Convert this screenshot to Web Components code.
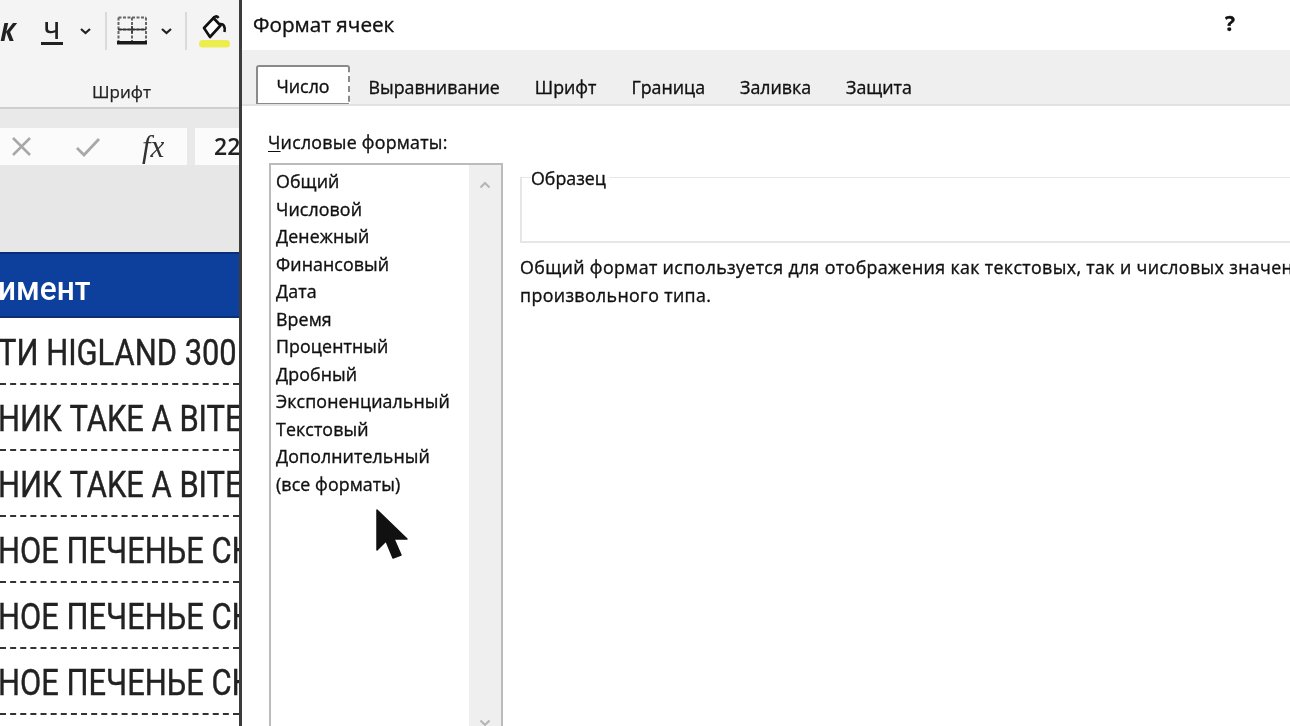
<!DOCTYPE html>
<html lang="ru"><head><meta charset="utf-8"><title>Формат ячеек</title>
<style>
html,body{margin:0;height:100%;overflow:hidden;background:#fff}
body{font-family:"Open Sans","Noto Sans",sans-serif;color:#111}
app-shell{filter:blur(.45px)}
</style></head><body>
<app-shell>
  <sheet-pane slot="left">
    <sheet-row>ТИ HIGLAND 300</sheet-row>
    <sheet-row>НИК TAKE A BITE</sheet-row>
    <sheet-row>НИК TAKE A BITE</sheet-row>
    <sheet-row>НОЕ ПЕЧЕНЬЕ СК</sheet-row>
    <sheet-row>НОЕ ПЕЧЕНЬЕ СК</sheet-row>
    <sheet-row>НОЕ ПЕЧЕНЬЕ СК</sheet-row>
  </sheet-pane>
  <format-dialog slot="right">
    <format-item>Общий</format-item><format-item>Числовой</format-item><format-item>Денежный</format-item>
    <format-item>Финансовый</format-item><format-item>Дата</format-item><format-item>Время</format-item>
    <format-item>Процентный</format-item><format-item>Дробный</format-item><format-item>Экспоненциальный</format-item>
    <format-item>Текстовый</format-item><format-item>Дополнительный</format-item><format-item>(все форматы)</format-item>
  </format-dialog>
  <mouse-cursor></mouse-cursor>
</app-shell>
<script>
function def(name, html){
  customElements.define(name, class extends HTMLElement{
    constructor(){super();this.attachShadow({mode:'open'}).innerHTML=html;}
  });
}
def('app-shell',`<style>
:host{display:grid;grid-template-columns:239px 3px 1fr;width:1290px;height:726px;overflow:hidden;position:relative}
.rule{background:#3c3c3c}
</style><slot name="left"></slot><div class="rule"></div><slot name="right"></slot><slot></slot>`);

def('sheet-pane',`<style>
:host{display:flex;flex-direction:column;overflow:hidden;background:#fff;min-width:0}
.ribbon{height:107px;background:#f4f4f4;border-bottom:2px solid #cfcfcf;display:flex;flex-direction:column;flex:none}
.tools{display:flex;align-items:center;height:48px;margin-top:7px}
.k{font:italic 700 25px "Open Sans",sans-serif;margin-left:0;width:24px;color:#222}
.u{width:34px;margin-left:11px;display:flex;justify-content:center}
.u span{font:600 23px/26px "Open Sans",sans-serif;border-bottom:3px solid #222;padding:0 3px;color:#222;height:25px;display:block}
.chev{flex:none}
.sep{width:2px;height:38px;background:#dadada;flex:none}
.group{font-size:17px;text-align:center;margin-top:25px;padding-left:4px;line-height:24px;color:#222;-webkit-text-stroke:.25px #222}
.fbar{background:#e9e9e9;padding-top:19px;display:flex;gap:8px;flex:none;height:37px}
.names{width:187px;background:#fbfbfb;display:flex;align-items:center}
.val{flex:1;background:#fbfbfb;font:600 23px/37px "Open Sans",sans-serif;padding-left:19px;overflow:hidden;white-space:nowrap;color:#222}
.fx{font:italic 400 31px "Liberation Serif",serif;color:#333;margin-left:41px;line-height:37px}
.gap{height:87px;background:#e7e7e7;flex:none}
.head{height:66px;background:#0d3f9c;border-top:2px solid #0a2e78;border-bottom:2px solid #0a2e78;color:#fff;flex:none;overflow:hidden;white-space:nowrap;box-sizing:border-box;margin-bottom:1px}
.head span{display:inline-block;font:500 34px/68px Roboto,sans-serif;transform:scaleX(.93);transform-origin:0 50%;margin-left:-2px}
</style>
<div class="ribbon">
  <div class="tools">
    <span class="k">К</span>
    <div class="u"><span>Ч</span></div>
    <svg class="chev" style="margin-left:10px" width="13" height="8" viewBox="0 0 13 8"><path d="M2 2l4.500 4L11 2" fill="none" stroke="#222" stroke-width="2.200"/></svg>
    <div class="sep" style="margin-left:13px"></div>
    <svg style="margin-left:9px;flex:none" width="32" height="32" viewBox="0 0 32 32"><path d="M2.500 2.500H30M2.500 14.500H30M2.500 2.500V27M30 2.500V27M16 2.500V27" fill="none" stroke="#666" stroke-width="2" stroke-dasharray="3 1.500"/><path d="M2 14.500H30M16 11V18" stroke="#333" stroke-width="1.500"/><rect x="1" y="26" width="30" height="3.500" fill="#1a1a1a"/></svg>
    <svg class="chev" style="margin-left:12px" width="13" height="8" viewBox="0 0 13 8"><path d="M2 2l4.500 4L11 2" fill="none" stroke="#222" stroke-width="2.200"/></svg>
    <div class="sep" style="margin-left:12px"></div>
    <svg style="margin-left:11px;flex:none" width="33" height="36" viewBox="0 0 33 36"><path d="M6 15L15.500 5l7 7.500L12 24z" fill="#fff" stroke="#111" stroke-width="2.600" stroke-linejoin="round"/><path d="M15 6c1-3 4-3.500 5.500-1M22 11c3.500-.5 5.500 2.500 4.500 8" fill="none" stroke="#111" stroke-width="2.600"/><rect x="1" y="27" width="31" height="7.500" rx="3.500" fill="#ecee50"/></svg>
  </div>
  <div class="group">Шрифт</div>
</div>
<div class="fbar">
  <div class="names">
    <svg style="margin-left:11px;flex:none" width="21" height="19" viewBox="0 0 21 19"><path d="M2 1l17 17M19 1L2 18" stroke="#a8a8a8" stroke-width="2.500" fill="none"/></svg>
    <svg style="margin-left:43px;flex:none" width="26" height="20" viewBox="0 0 26 20"><path d="M2 11l7 7L24 2" stroke="#a8a8a8" stroke-width="2.800" fill="none"/></svg>
    <span class="fx">fx</span>
  </div>
  <div class="val">22</div>
</div>
<div class="gap"></div>
<div class="head"><span>имент</span></div>
<slot></slot>`);

def('sheet-row',`<style>
:host{display:block;height:66px;box-sizing:border-box;border-bottom:2px dashed #333;overflow:hidden;white-space:nowrap;background:#fff;flex:none}
span{display:inline-block;font:400 36px/68px Roboto,sans-serif;transform:scaleX(.858);transform-origin:0 50%;margin-left:-2px;color:#222;-webkit-text-stroke:.4px #222}
</style><span><slot></slot></span>`);

def('format-dialog',`<style>
:host{display:flex;flex-direction:column;min-width:0;overflow:hidden;background:#fff;font-size:17.800px;white-space:nowrap;color:#111;-webkit-text-stroke:.35px #111}
.title{height:50px;flex:none;display:flex;align-items:center;justify-content:space-between;padding:0 55px 3px 11px;box-sizing:border-box;font-size:20.700px}
.q{font-weight:700;font-size:21px;margin-top:-2px}
.tabs{height:54px;flex:none;background:#efefef;border-bottom:2px solid #e2e2e2;display:flex;align-items:flex-end;padding-left:14px}
.tab{height:37px;line-height:40px;padding:0 17.500px}
.tab.on{background:#fff;border:2px solid #8a8a8a;border-right-style:dashed;border-bottom-width:1px;border-radius:3px 3px 0 0;padding:0;box-sizing:border-box;width:94px;text-align:center;margin-right:1px;height:39px;line-height:38px}
.body{display:flex;flex:1;min-height:0;padding:23px 0 0 27px;gap:17px}
.col{width:234px;flex:none;display:flex;flex-direction:column}
.lab{margin-bottom:8px;line-height:26px;margin-left:-1px;letter-spacing:.25px}
u{text-underline-offset:2px}
.list{flex:1;border:2px solid #bcbcbc;border-bottom:0;display:flex;min-height:0;width:234px;box-sizing:border-box}
.items{flex:1;padding:3px 0 0 5px;letter-spacing:.1px}
.sb{width:32px;background:#efefef;flex:none;display:flex;flex-direction:column;justify-content:space-between;align-items:center;padding:16px 0 0;box-sizing:border-box}
.right{flex:1;min-width:0;padding-top:48px}
.sample{height:66px;border:2px solid #e6e6e6;border-top-width:1px;box-sizing:border-box;width:800px;position:relative;border-right:0}
.sample span{position:absolute;left:9px;top:-12px;background:#fff;padding-right:3px;line-height:24px}
.desc{line-height:28px;margin-top:10px;width:800px;overflow:hidden;letter-spacing:.37px}
</style>
<div class="title"><span>Формат ячеек</span><span class="q">?</span></div>
<div class="tabs">
  <div class="tab on">Число</div><div class="tab">Выравнивание</div><div class="tab">Шрифт</div><div class="tab">Граница</div><div class="tab">Заливка</div><div class="tab">Защита</div>
</div>
<div class="body">
  <div class="col">
    <div class="lab"><u>Ч</u>исловые форматы:</div>
    <div class="list">
      <div class="items"><slot></slot></div>
      <div class="sb">
        <svg width="12" height="8" viewBox="0 0 12 8"><path d="M1.500 6.500L6 2l4.500 4.500" fill="none" stroke="#b5b5b5" stroke-width="2"/></svg>
        <svg width="12" height="8" viewBox="0 0 12 8" style="margin-bottom:-1px"><path d="M1.500 1.500L6 6l4.500-4.500" fill="none" stroke="#b5b5b5" stroke-width="2"/></svg>
      </div>
    </div>
  </div>
  <div class="right">
    <div class="sample"><span>Образец</span></div>
    <div class="desc">Общий формат используется для отображения как текстовых, так и числовых значений<br>произвольного типа.</div>
  </div>
</div>`);

def('format-item',`<style>:host{display:block;height:27.500px;line-height:27.500px}</style><slot></slot>`);

def('mouse-cursor',`<style>:host{position:absolute;left:375px;top:508px;width:36px;height:54px}</style>
<svg width="36" height="54" viewBox="0 0 36 54"><path d="M2 2L2 42L11 33L18 50L26 47L19 31L32 31Z" fill="#111" stroke="#111" stroke-width="1.500" stroke-linejoin="round"/></svg>`);
</script>
</body></html>
